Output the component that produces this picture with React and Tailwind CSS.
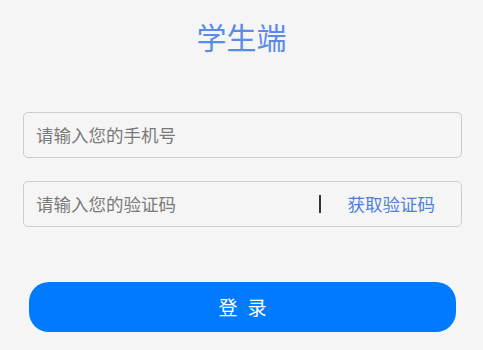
import React, { useState } from 'react';

const App = () => {
  const [phone, setPhone] = useState('');
  const [code, setCode] = useState('');

  return (
    <div
      className="min-h-[350px] w-full bg-[#f5f5f5] flex flex-col"
      style={{ fontFamily: '"Noto Sans CJK SC", "Noto Sans", sans-serif' }}
    >
      {/* Title */}
      <h1 className="pt-[21px] text-center text-[30px] leading-[30px] font-normal text-[#5a8be8]">
        学生端
      </h1>

      {/* Phone */}
      <div className="mt-[61px] ml-[23px] mr-[21px] h-[46px] rounded-[5px] border border-[#cccccc] bg-[#f5f5f5] flex items-center px-[12px]">
        <input
          value={phone}
          onChange={(e) => setPhone(e.target.value)}
          placeholder="请输入您的手机号"
          className="flex-1 min-w-0 bg-transparent outline-none text-[17.5px] text-[#333] placeholder:text-[#7a7a7a]"
        />
      </div>

      {/* Code */}
      <div className="mt-[23px] ml-[23px] mr-[21px] h-[46px] rounded-[5px] border border-[#cccccc] bg-[#f5f5f5] flex items-center pl-[12px] pr-[26px]">
        <input
          value={code}
          onChange={(e) => setCode(e.target.value)}
          placeholder="请输入您的验证码"
          className="flex-1 min-w-0 bg-transparent outline-none text-[17.5px] text-[#333] placeholder:text-[#7a7a7a]"
        />
        <span className="w-[1.5px] h-[18px] bg-[#333]" />
        <button className="ml-[27px] text-[17.5px] text-[#4f7fdd]">获取验证码</button>
      </div>

      {/* Login */}
      <button className="mt-[55px] ml-[29px] mr-[27px] h-[50px] rounded-[20px] bg-[#007aff] text-white text-[19px] flex items-center justify-center gap-[10px]">
        <span>登</span>
        <span>录</span>
      </button>
    </div>
  );
};

export default App;
